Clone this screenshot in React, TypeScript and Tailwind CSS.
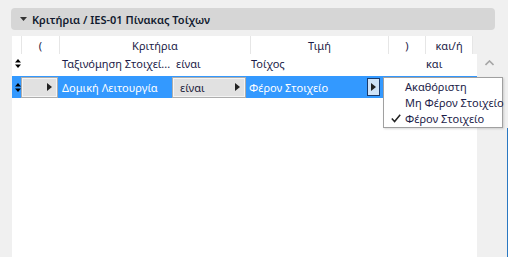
const font = { fontFamily: '"Noto Sans", "Open Sans", sans-serif' };

function SortIcon({ color = "#000" }: { color?: string }) {
  return (
    <svg width="6" height="9" viewBox="0 0 6 9">
      <path d="M3 0 L6 3.5 H0 Z" fill={color} />
      <path d="M3 9 L6 5.5 H0 Z" fill={color} />
    </svg>
  );
}

function Arrow() {
  return (
    <svg width="5" height="8" viewBox="0 0 5 8">
      <path d="M0 0 L5 4 L0 8 Z" fill="#222" />
    </svg>
  );
}

function Combo({ label, className }: { label?: string; className: string }) {
  return (
    <div
      className={`flex h-[19px] items-center justify-between border border-[#f4f4f4] bg-[#e1e1e1] pl-[6px] pr-[4px] text-[#1c1c3a] outline outline-1 outline-[#adadad] ${className}`}
    >
      <span>{label}</span>
      <Arrow />
    </div>
  );
}

export default function App() {
  return (
    <div
      className="relative flex h-[257px] w-[508px] flex-col overflow-hidden whitespace-nowrap bg-[#f0f0f0] text-[11px] leading-[15px]"
      style={font}
    >
      <div className="ml-[11px] mt-[8px] flex h-[22px] w-[484px] items-center rounded-[4px] bg-[#d6d6d6]">
        <svg width="7" height="4" viewBox="0 0 7 4" className="ml-[9px] mr-[5px]">
          <path d="M0 0 H7 L3.5 4 Z" fill="#333" />
        </svg>
        <span className="text-[11px] font-semibold text-[#111a2e]">Κριτήρια / IES-01 Πίνακας Τοίχων</span>
      </div>

      <div className="mt-[6px] flex flex-1">
        <div className="ml-[12px] flex w-[465px] flex-col">
          <div className="flex h-[18px] w-[461px] items-center bg-white text-[#1c1c48]">
            <div className="h-full w-[9px]" />
            <div className="flex h-full w-[38px] items-center justify-center border-l border-[#e6e6e6]">(</div>
            <div className="flex h-full w-[191px] items-center justify-center border-l border-[#e6e6e6]">Κριτήρια</div>
            <div className="flex h-full w-[138px] items-center justify-center border-l border-[#e6e6e6]">Τιμή</div>
            <div className="flex h-full w-[37px] items-center justify-center border-l border-[#e6e6e6]">)</div>
            <div className="flex h-full w-[48px] items-center justify-center border-x border-[#e6e6e6]">και/ή</div>
          </div>
          <div className="flex flex-1 flex-col bg-white">
            <div className="flex h-[22px] items-center pb-[4px] text-[#1c1c48]">
              <div className="flex w-[47px] shrink-0 pl-[3px]">
                <SortIcon />
              </div>
              <div className="w-[114px] shrink-0 pl-[3px]">Ταξινόμηση Στοιχεί...</div>
              <div className="w-[77px] shrink-0 pl-[3px]">είναι</div>
              <div className="w-[175px] shrink-0 pl-[1px]">Τοίχος</div>
              <div className="pl-[1px]">και</div>
            </div>
            <div className="flex h-[22px] items-center bg-[#3399ff] text-white">
              <div className="flex w-[10px] shrink-0 pl-[3px]">
                <SortIcon />
              </div>
              <Combo className="w-[35px] shrink-0" />
              <div className="w-[116px] shrink-0 pl-[5px]">Δομική Λειτουργία</div>
              <Combo label="είναι" className="w-[72px] shrink-0" />
              <div className="ml-[3px] w-[119px] shrink-0 pl-[1px]">Φέρον Στοιχείο</div>
              <div className="flex h-[18px] w-[13px] shrink-0 items-center justify-center border border-[#1a3a6a] bg-[#cfe3f7]">
                <Arrow />
              </div>
            </div>
          </div>
        </div>
        <div className="flex flex-1 justify-center pt-[24px]">
          <svg width="9" height="6" viewBox="0 0 9 6" className="mr-[6px]">
            <path d="M0.5 5 L4.5 1 L8.5 5" stroke="#a6a6a6" strokeWidth="1.6" fill="none" />
          </svg>
        </div>
      </div>

      <div className="absolute right-0 top-[128px] h-[129px] w-[1px] bg-[#2a78c2]" />

      <div className="absolute left-[383px] top-[77px] flex h-[51px] w-[120px] flex-col justify-center border border-[#a0a0a0] bg-white text-[#1c1c48] shadow-[1px_1px_2px_rgba(0,0,0,0.15)]">
        <div className="flex h-[16px] items-center pl-[21px]">Ακαθόριστη</div>
        <div className="flex h-[16px] items-center pl-[21px]">Μη Φέρον Στοιχείο</div>
        <div className="flex h-[16px] items-center">
          <svg width="10" height="9" viewBox="0 0 10 9" className="ml-[7px] mr-[4px]">
            <path d="M0.8 4.6 L3.6 7.6 L9.2 0.8" stroke="#222" strokeWidth="1.5" fill="none" />
          </svg>
          Φέρον Στοιχείο
        </div>
      </div>
    </div>
  );
}
